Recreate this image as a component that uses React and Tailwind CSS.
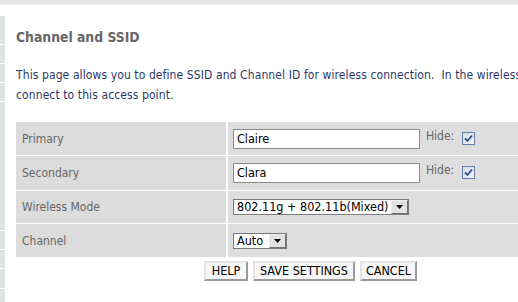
import React from "react";

function Check() {
  return (
    <span className="inline-flex w-[13px] h-[13px] border border-[#5f7fa8] bg-gradient-to-br from-[#d4dbe6] to-[#f4f6f9] items-center justify-center">
      <svg width="9" height="9" viewBox="0 0 9 9">
        <path d="M1 4.5 L3.5 7 L8 1.5" stroke="#2c4f96" strokeWidth="1.8" fill="none" />
      </svg>
    </span>
  );
}

function Select({ text, w }) {
  return (
    <span className={`inline-flex h-[16px] border border-[#7b7b7b] bg-white items-stretch ${w}`}>
      <span className="flex-1 pl-[3px] text-[12.5px] leading-[14px] text-black whitespace-nowrap">{text}</span>
      <span className="w-[17px] border border-t-[#f0f0f0] border-l-[#f0f0f0] border-b-[#6f6f6f] border-r-[#6f6f6f] bg-[#e2e2e2] flex items-center justify-center">
        <svg width="7" height="4" viewBox="0 0 7 4"><path d="M0 0 H7 L3.5 4 Z" fill="#000" /></svg>
      </span>
    </span>
  );
}

function Btn({ children, w }) {
  return (
    <button className={`h-[20px] ${w} bg-[#f7f7f7] border-2 border-t-[#e4e4e4] border-l-[#e4e4e4] border-b-[#9b9b9b] border-r-[#9b9b9b] text-[12.5px] leading-[14px] text-black px-0`}>
      {children}
    </button>
  );
}

export default function App() {
  const strip = [10, 28, 18, 18, 18, 128, 18, 18, 19, 20];
  return (
    <div className="w-[518px] h-[302px] overflow-hidden bg-white font-['DejaVu_Sans_Condensed','DejaVu_Sans',sans-serif]">
      <div className="h-[5px] bg-gradient-to-b from-[#dfe1e0] to-[#eceeed]" />
      <div className="flex">
        <div className="w-[5px] flex flex-col gap-[1px]">
          {strip.map((h, i) => (
            <div key={i} style={{ height: h }} className={i === 0 ? "bg-white" : "bg-[#dde4e4]"} />
          ))}
        </div>
        <div className="pl-[11px] flex-1 min-w-0">
          <h1 className="mt-[24px] text-[13.8px] leading-[16px] font-bold text-[#666666]">
            Channel and SSID
          </h1>
          <p className="mt-[20px] text-[12px] tracking-[0.1px] leading-[20px] text-[#2c3867] whitespace-nowrap">
            This page allows you to define SSID and Channel ID for wireless connection.&nbsp; In the wireless
            <br />
            connect to this access point.
          </p>
          <div className="mt-[17px] flex flex-col gap-[1px] w-[520px] text-[12px] text-[#666666]">
            <div className="flex h-[33px] gap-[2px]">
              <div className="w-[210px] bg-[#dcdcdc] pl-[6px] flex items-center">Primary</div>
              <div className="flex-1 bg-[#dedede] pl-[5px] pt-[7px] flex items-start">
                <span className="w-[187px] h-[20px] border border-[#8a8a8a] bg-white text-black text-[12.5px] pl-[3px] leading-[18px]">Claire</span>
                <span className="ml-[6px] leading-[14px]">Hide:</span>
                <span className="ml-[8px] mt-[3px] flex"><Check /></span>
              </div>
            </div>
            <div className="flex h-[34px] gap-[2px]">
              <div className="w-[210px] bg-[#dcdcdc] pl-[6px] flex items-center">Secondary</div>
              <div className="flex-1 bg-[#dedede] pl-[5px] pt-[7px] flex items-start">
                <span className="w-[187px] h-[20px] border border-[#8a8a8a] bg-white text-black text-[12.5px] pl-[3px] leading-[18px]">Clara</span>
                <span className="ml-[6px] leading-[14px]">Hide:</span>
                <span className="ml-[8px] mt-[3px] flex"><Check /></span>
              </div>
            </div>
            <div className="flex h-[32px] gap-[2px]">
              <div className="w-[210px] bg-[#dcdcdc] pl-[6px] flex items-center">Wireless Mode</div>
              <div className="flex-1 bg-[#dedede] pl-[5px] flex items-center">
                <Select text="802.11g + 802.11b(Mixed)" w="w-[176px]" />
              </div>
            </div>
            <div className="flex h-[33px] gap-[2px]">
              <div className="w-[210px] bg-[#dcdcdc] pl-[6px] flex items-center">Channel</div>
              <div className="flex-1 bg-[#dedede] pl-[5px] flex items-center">
                <Select text="Auto" w="w-[54px]" />
              </div>
            </div>
          </div>
          <div className="mt-[4px] ml-[188px] flex gap-[5px]">
            <Btn w="w-[44px]">HELP</Btn>
            <Btn w="w-[102px]">SAVE SETTINGS</Btn>
            <Btn w="w-[57px]">CANCEL</Btn>
          </div>
        </div>
      </div>
    </div>
  );
}
